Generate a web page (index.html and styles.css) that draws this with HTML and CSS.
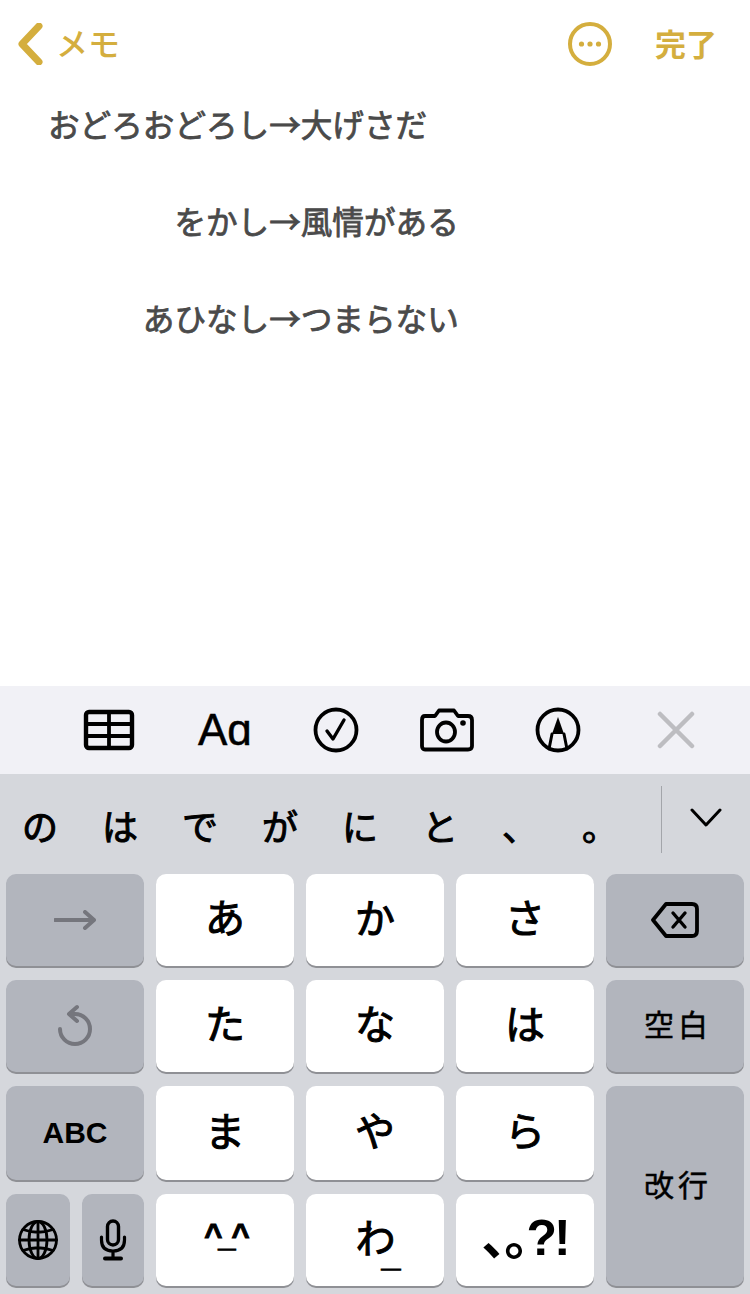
FILE: index.html
```html
<!DOCTYPE html>
<html lang="ja">
<head>
  <meta charset="UTF-8" />
  <meta name="viewport" content="width=device-width, initial-scale=1" />
  <title>メモ</title>
  <link rel="stylesheet" href="styles.css">
</head>
<body>
<div class="pantalla">
  <header class="barra">
    <div class="volver">
      <svg class="chevron" width="28" height="42" viewBox="0 0 28 42"><path d="M22 3 L5 21 L22 39" /></svg>
      <span class="etiqueta">メモ</span>
    </div>
    <div class="acciones">
      <svg width="46" height="46" viewBox="0 0 46 46">
        <circle class="anillo" cx="23" cy="23" r="20" />
        <circle class="punto" cx="14.500" cy="23" r="2.600" />
        <circle class="punto" cx="23" cy="23" r="2.600" />
        <circle class="punto" cx="31.500" cy="23" r="2.600" />
      </svg>
      <span class="etiqueta hecho">完了</span>
    </div>
  </header>

  <main class="nota">
    <p>おどろおどろし→大げさだ</p>
    <p>　　　　をかし→風情がある</p>
    <p>　　　あひなし→つまらない</p>
  </main>

  <div class="herramientas">
    <svg width="52" height="42" viewBox="0 0 52 42" class="trazo">
      <rect x="3" y="3" width="46" height="36" rx="3" stroke-width="4.400" />
      <path d="M3 15 H49 M3 27 H49 M26 3 V39" stroke-width="3.800" />
    </svg>
    <span class="aa">Aɑ</span>
    <svg width="46" height="46" viewBox="0 0 46 46" class="trazo">
      <circle cx="23" cy="23" r="20.500" stroke-width="3.800" />
      <path d="M14 24 L20 32 L31 13" stroke-width="3.400" />
    </svg>
    <svg width="54" height="44" viewBox="0 0 54 44" class="trazo">
      <path d="M5 8 H15 L19 2.500 H34 L38 8 H48 Q52 8 52 12 V38 Q52 41.500 48 41.500 H5 Q2 41.500 2 38 V12 Q2 8 5 8 Z" stroke-width="3.800" />
      <ellipse cx="26" cy="24" rx="9" ry="9.500" stroke-width="3.800" />
      <circle class="relleno" cx="43" cy="15" r="2.800" />
    </svg>
    <svg width="46" height="46" viewBox="0 0 46 46" class="trazo">
      <circle cx="23" cy="23" r="20.500" stroke-width="3.800" />
      <path class="relleno" d="M23 10 L29 27 H17 Z" />
      <path d="M17 27 L14 42 M29 27 L32 42" stroke-width="3" />
    </svg>
    <svg width="38" height="38" viewBox="0 0 38 38" class="cerrar"><path d="M3 3 L35 35 M35 3 L3 35" /></svg>
  </div>

  <div class="teclado">
    <div class="sugerencias">
      <div class="candidatos">
        <span>の</span><span>は</span><span>で</span><span>が</span><span>に</span><span>と</span><span>、</span><span>。</span>
      </div>
      <div class="expandir">
        <svg width="32" height="20" viewBox="0 0 32 20"><path d="M2 2 L16 17 L30 2" /></svg>
      </div>
    </div>

    <div class="teclas">
      <div class="tecla gris">
        <svg width="42" height="20" viewBox="0 0 42 20" class="apagado"><path d="M1 10 H40 M31 2 L40 10 L31 18" /></svg>
      </div>
      <div class="tecla kana">あ</div>
      <div class="tecla kana">か</div>
      <div class="tecla kana">さ</div>
      <div class="tecla gris">
        <svg width="48" height="36" viewBox="0 0 48 36" class="trazo">
          <path d="M15 2 H41 Q46 2 46 7 V29 Q46 34 41 34 H15 L2 18 Z" stroke-width="3.800" />
          <path d="M22 11 L34 25 M34 11 L22 25" stroke-width="3.400" />
        </svg>
      </div>

      <div class="tecla gris">
        <svg width="38" height="44" viewBox="0 0 38 44" class="apagado"><path d="M4 25 A15 15 0 1 0 19 10 H14 M21 3 L13 10 L21 17" /></svg>
      </div>
      <div class="tecla kana">た</div>
      <div class="tecla kana">な</div>
      <div class="tecla kana">は</div>
      <div class="tecla gris accion">空白</div>

      <div class="tecla gris abc">ABC</div>
      <div class="tecla kana">ま</div>
      <div class="tecla kana">や</div>
      <div class="tecla kana">ら</div>
      <div class="tecla gris accion alta">改行</div>

      <div class="doble">
        <div class="tecla gris">
          <svg width="42" height="42" viewBox="0 0 42 42" class="trazo fino">
            <circle cx="21" cy="21" r="18.500" />
            <ellipse cx="21" cy="21" rx="9" ry="18.500" />
            <path d="M21 2.500 V39.500 M2.500 21 H39.500 M6 10.500 Q21 16 36 10.500 M6 31.500 Q21 26 36 31.500" />
          </svg>
        </div>
        <div class="tecla gris">
          <svg width="28" height="42" viewBox="0 0 28 42" class="trazo">
            <rect x="8.500" y="2" width="11" height="24" rx="5.500" stroke-width="3.400" />
            <path d="M2.500 18 V21 Q2.500 32 14 32 Q25.500 32 25.500 21 V18 M14 32 V39" stroke-width="3.200" />
            <path d="M6 39.500 H22" stroke-width="4" />
          </svg>
        </div>
      </div>
      <div class="tecla kana emoji">^_^</div>
      <div class="tecla kana wa">わ<span class="guion">_</span></div>
      <div class="tecla kana signos">､｡?!</div>
    </div>
  </div>
</div>
</body>
</html>
```

FILE: styles.css
```css
* {
  box-sizing: border-box;
}
body {
  margin: 0;
  background: white;
  font-family: "Noto Sans CJK JP", "Liberation Sans", sans-serif;
}
.pantalla {
  width: 750px;
  height: 1294px;
  display: flex;
  flex-direction: column;
  overflow: hidden;
}

/* barra de arriba */
.barra {
  height: 75px;
  display: flex;
  justify-content: space-between;
  align-items: flex-start;
  padding: 21px 33px 0 17px;
  color: #d4ae3e;
  font-size: 32px;
  font-weight: 500;
}
.volver, .acciones {
  display: flex;
  align-items: center;
}
.volver {
  gap: 11px;
  height: 46px;
}
.acciones {
  gap: 42px;
  height: 46px;
}
.etiqueta {
  padding-bottom: 4px;
}
.chevron path {
  fill: none;
  stroke: #d4ae3e;
  stroke-width: 7;
  stroke-linecap: round;
  stroke-linejoin: round;
}
.anillo {
  fill: none;
  stroke: #d4ae3e;
  stroke-width: 4;
}
.punto {
  fill: #d4ae3e;
}
.hecho {
  font-weight: 700;
  font-size: 31px;
}

/* texto de la nota */
.nota {
  height: 611px;
  padding: 0 0 0 48px;
  color: #4a4a4a;
  font-size: 31.600px;
  font-weight: 400;
  -webkit-text-stroke: 0.8px #4a4a4a;
  line-height: 97px;
}
.nota p {
  margin: 0;
  white-space: pre;
}

/* herramientas */
.herramientas {
  height: 88px;
  background: #f1f1f6;
  display: flex;
  align-items: center;
  gap: 61px;
  padding: 0 0 0 83px;
}
.trazo {
  fill: none;
  stroke: black;
  stroke-linecap: round;
  stroke-linejoin: round;
}
.trazo .relleno {
  fill: black;
  stroke: none;
}
.fino {
  stroke-width: 2.800;
}
.aa {
  width: 54px;
  margin-left: 2px;
  font-family: "Liberation Sans", sans-serif;
  font-size: 44px;
  -webkit-text-stroke: 0.5px black;
  color: black;
  white-space: nowrap;
}
.cerrar {
  margin-left: 15px;
}
.cerrar path {
  fill: none;
  stroke: #bdbdc1;
  stroke-width: 4.500;
  stroke-linecap: round;
}

/* teclado */
.teclado {
  flex: 1;
  background: #d5d7dc;
  padding: 0 6px;
}
.sugerencias {
  height: 100px;
  display: flex;
  margin: 0 -6px;
}
.candidatos {
  width: 661px;
  display: flex;
  font-size: 36px;
  font-weight: 400;
  -webkit-text-stroke: 1px black;
  color: black;
  padding: 26px 0 0 0;
}
.candidatos span {
  width: 80px;
  text-align: center;
  line-height: 50px;
}
.expandir {
  flex: 1;
  height: 67px;
  margin-top: 12px;
  border-left: 1px solid #a3a5aa;
  display: flex;
  justify-content: center;
  padding-top: 22px;
}
.expandir path {
  fill: none;
  stroke: black;
  stroke-width: 3;
  stroke-linecap: round;
  stroke-linejoin: round;
}
.teclas {
  display: grid;
  grid-template-columns: repeat(5, 138px);
  grid-template-rows: 92px 92px 94px 92px;
  column-gap: 12px;
  row-gap: 14px;
}
.tecla {
  display: flex;
  align-items: center;
  justify-content: center;
  border-radius: 10px;
  color: black;
  box-shadow: 0 2px 0 #8f9095;
}
.gris {
  background: #b2b5bd;
}
.kana {
  background: white;
  font-size: 40px;
  font-weight: 400;
  -webkit-text-stroke: 1px black;
  padding-bottom: 8px;
}
.accion {
  font-size: 30px;
  font-weight: 400;
  -webkit-text-stroke: 0.5px black;
  letter-spacing: 4px;
  padding: 0 0 6px 6px;
}
.abc {
  font-family: "Liberation Sans", sans-serif;
  font-size: 30px;
  font-weight: 700;
}
.alta {
  grid-row: span 2;
}
.apagado {
  fill: none;
  stroke: #75767d;
  stroke-width: 4;
  stroke-linecap: round;
  stroke-linejoin: round;
}
.doble {
  display: grid;
  grid-template-columns: 64px 62px;
  column-gap: 12px;
}
.emoji {
  font-family: "Liberation Sans", sans-serif;
  font-size: 31px;
  font-weight: 700;
  letter-spacing: -4px;
}
.guion {
  font-family: "Liberation Sans", sans-serif;
  font-size: 34px;
  font-weight: 700;
  align-self: flex-end;
  margin: 0 -6px 4px -14px;
}
.signos {
  font-family: "Liberation Sans", "Noto Sans CJK JP", sans-serif;
  font-size: 50px;
  font-weight: 700;
  -webkit-text-stroke: 0;
  letter-spacing: -3px;
  padding-bottom: 14px;
}
```
